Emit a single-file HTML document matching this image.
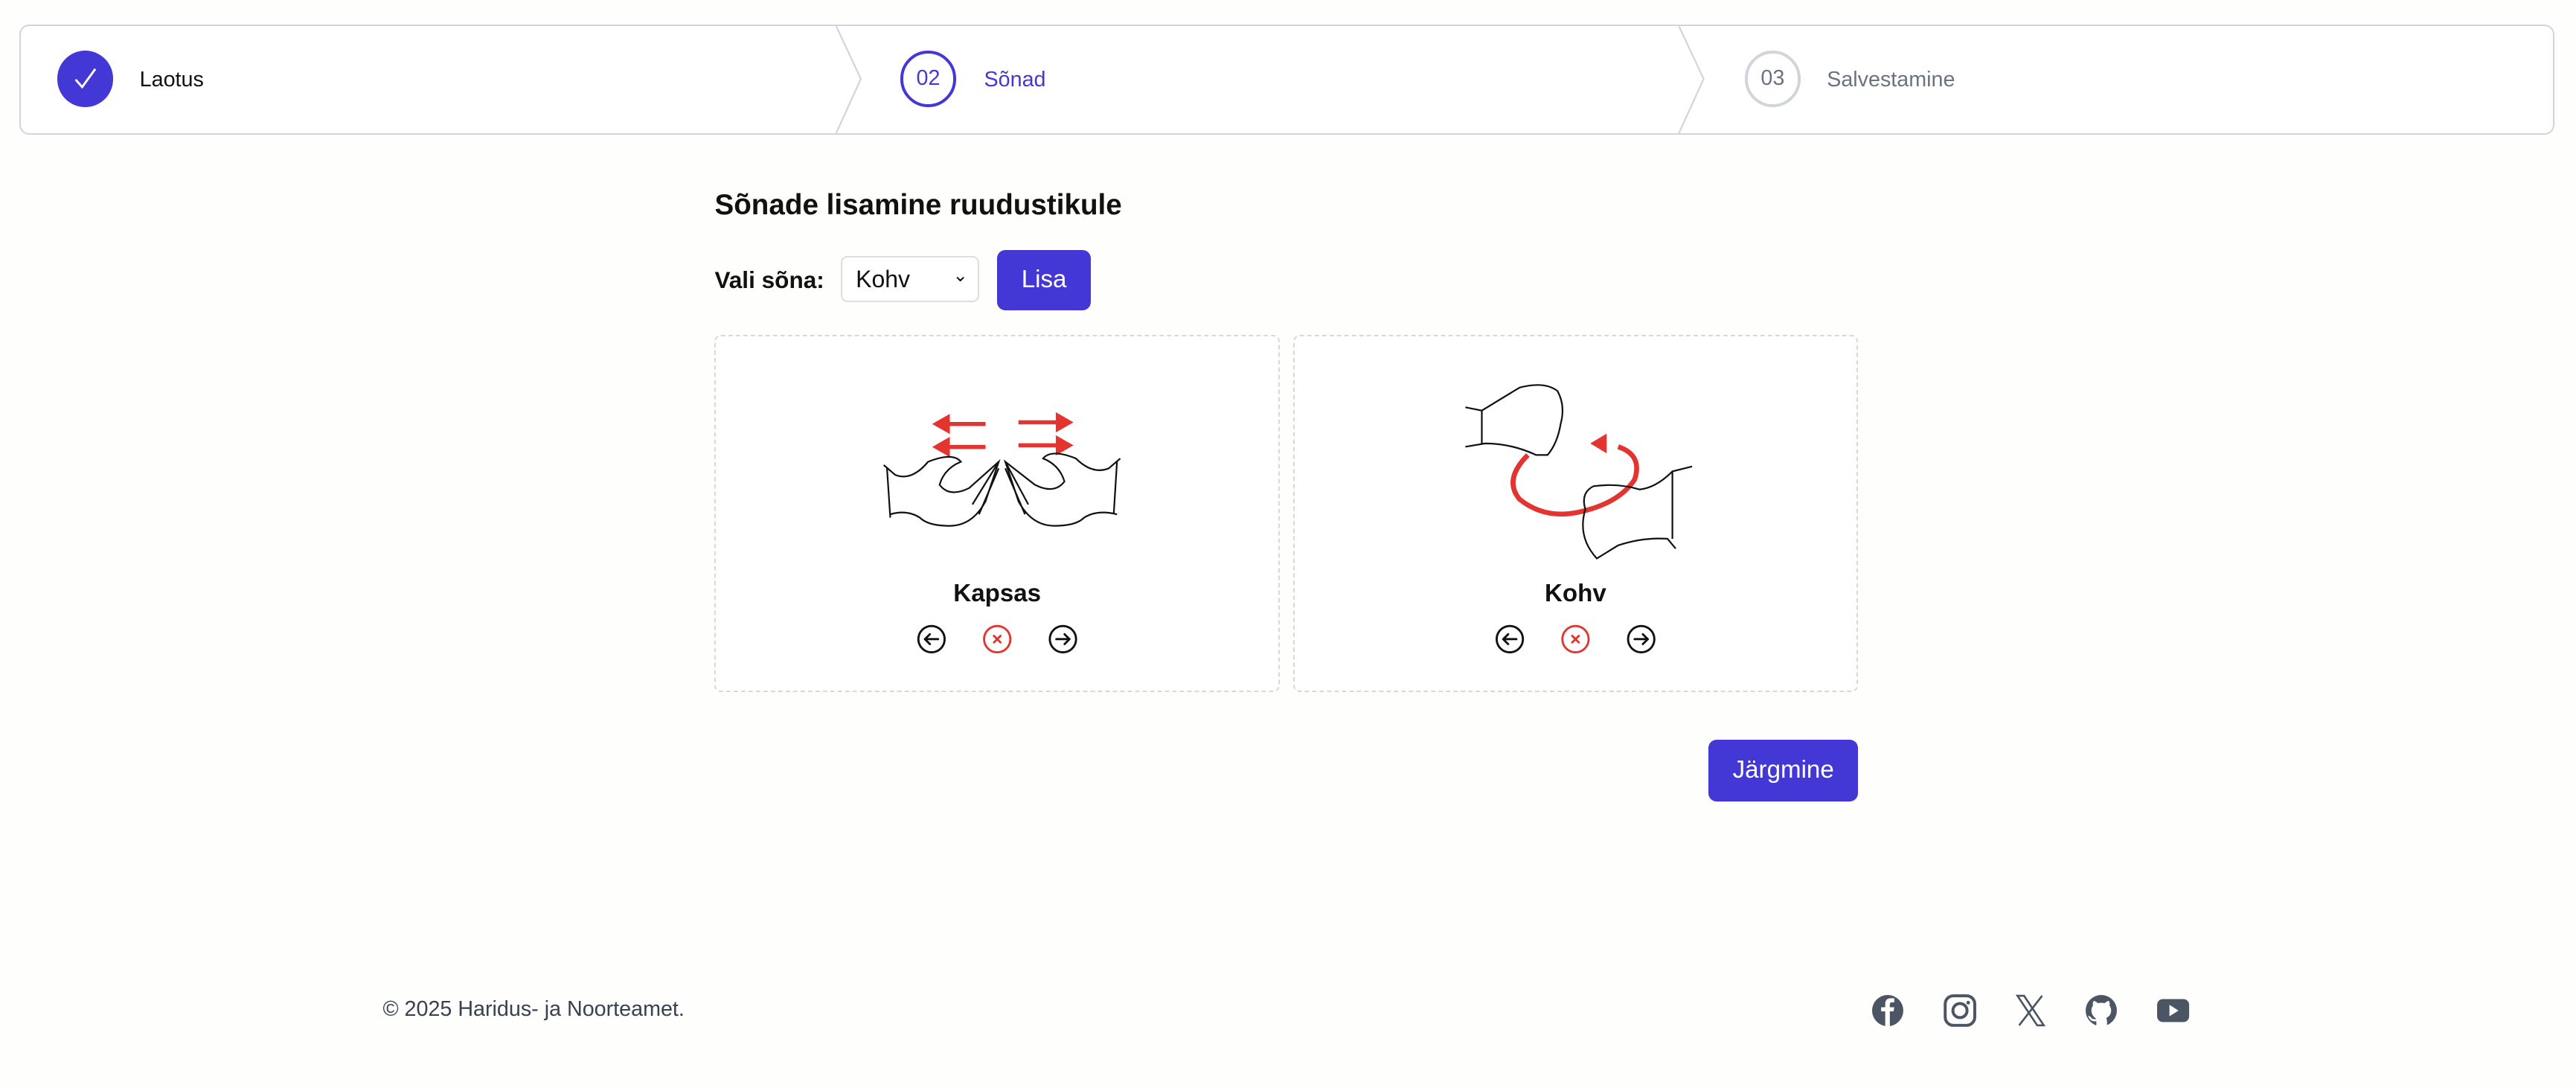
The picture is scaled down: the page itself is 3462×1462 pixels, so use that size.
<!DOCTYPE html>
<html><head><meta charset="utf-8"><style>
html,body{margin:0;padding:0;background:#fefefd;}
body{width:1568px;height:662px;zoom:2.20791;position:relative;overflow:hidden;font-family:"Liberation Sans",Arial,sans-serif;color:#111;}
.abs{position:absolute;}
.stepper{left:12px;top:15px;width:1541px;height:65px;border:1px solid #d1d5db;border-radius:6px;background:#fff;}
.circ{width:34px;height:34px;border-radius:50%;box-sizing:border-box;display:flex;align-items:center;justify-content:center;font-size:13px;}
.lbl{font-size:13px;}
.btn{background:#4338d6;color:#fff;border-radius:5px;display:flex;align-items:center;justify-content:center;font-size:15px;}
.card{width:344px;height:217px;border:1px dashed #d8d8d8;border-radius:4px;background:#fff;box-sizing:border-box;}
.name{font-weight:bold;font-size:15px;width:344px;text-align:center;}
</style></head><body>
<div class="abs stepper"></div>
<svg class="abs" style="left:0;top:0" width="1568" height="90">
<polyline points="509,16 524,48 509,81" fill="none" stroke="#d1d5db" stroke-width="1"/>
<polyline points="1022,16 1037,48 1022,81" fill="none" stroke="#d1d5db" stroke-width="1"/>
</svg>
<div class="abs circ" style="left:35px;top:31px;background:#4338d6;">
<svg width="18" height="18" viewBox="0 0 18 18"><path d="M3 9.5 L7 14 L15 3" fill="none" stroke="#fff" stroke-width="1.3"/></svg></div>
<div class="abs lbl" style="left:85px;top:41px;color:#111;">Laotus</div>
<div class="abs circ" style="left:548px;top:31px;border:2px solid #4338d6;color:#4338d6;">02</div>
<div class="abs lbl" style="left:599px;top:41px;color:#4338d6;">Sõnad</div>
<div class="abs circ" style="left:1062px;top:31px;border:2px solid #d1d5db;color:#6b7280;">03</div>
<div class="abs lbl" style="left:1112px;top:41px;color:#6b7280;">Salvestamine</div>

<div class="abs" style="left:435px;top:115px;font-size:17.5px;font-weight:bold;">Sõnade lisamine ruudustikule</div>
<div class="abs" style="left:435px;top:162px;font-size:14.3px;font-weight:bold;">Vali sõna:</div>
<div class="abs" style="left:512px;top:156px;width:84px;height:28px;border:1px solid #ddd;border-radius:4px;background:#fff;box-sizing:border-box;font-size:14.5px;padding:5px 8px;">Kohv<span style="position:absolute;right:6px;top:4px;font-size:11px;">&#8964;</span></div>
<div class="abs btn" style="left:607px;top:152px;width:57px;height:37px;">Lisa</div>

<div class="abs card" style="left:435px;top:204px;"></div>
<div class="abs card" style="left:787px;top:204px;"></div>
<svg class="abs" style="left:530px;top:245px" width="160" height="85" viewBox="0 0 160 85">
<g stroke="#e3342f" stroke-width="2.5" fill="#e3342f">
<line x1="45" y1="13" x2="70" y2="13"/><polygon points="40,13 47,9 47,17"/>
<line x1="45" y1="27" x2="70" y2="27"/><polygon points="40,27 47,23 47,31"/>
<line x1="90" y1="12" x2="114" y2="12"/><polygon points="121,12 114,8 114,16"/>
<line x1="90" y1="26" x2="114" y2="26"/><polygon points="121,26 114,22 114,30"/>
</g>
<g fill="none" stroke="#111" stroke-width="1">
<path d="M10 40 L12 70 M8 38 L15 44 Q25 48 35 36 Q50 30 55 36 Q45 40 42 50 Q48 58 60 52 L78 36 L70 60 Q62 75 48 75 Q35 75 30 70 Q22 65 12 68"/>
<path d="M150 36 L148 68 M152 34 L145 40 Q135 44 125 34 Q110 28 105 34 Q115 38 118 48 Q112 56 100 50 L82 36 L90 60 Q98 75 112 75 Q125 75 130 70 Q138 65 150 68"/>
<path d="M78 36 L62 62 M78 40 L66 68 M82 36 L96 62 M82 40 L94 68"/>
</g></svg>
<svg class="abs" style="left:890px;top:232px" width="145" height="112" viewBox="0 0 145 112">
<path d="M40 45 Q25 60 35 72 Q50 84 70 80 Q95 75 105 60 Q110 45 95 40" fill="none" stroke="#e3342f" stroke-width="3"/>
<polygon points="78,38 88,32 88,44" fill="#e3342f"/>
<g fill="none" stroke="#111" stroke-width="1">
<path d="M2 16 L12 18 Q25 10 35 4 Q50 0 58 6 Q63 15 60 26 Q58 38 52 45 L45 45 Q30 38 14 38 L2 40 M12 18 L12 38"/>
<path d="M140 52 L128 55 Q118 65 108 66 Q95 62 80 64 Q72 68 75 78 Q70 95 82 108 L95 100 Q110 95 125 96 L130 102 M128 55 L128 96"/>
</g></svg>

<div class="abs name" style="left:435px;top:353px;">Kapsas</div>
<div class="abs name" style="left:787px;top:353px;">Kohv</div>

<svg class="abs" style="left:0;top:0" width="1568" height="420" viewBox="0 0 1568 420">
<g fill="none" stroke-width="1.3" stroke-linecap="round" stroke-linejoin="round">
<g stroke="#111"><circle cx="567" cy="389" r="8"/><path d="M571 389 H563 M566 386 L563 389 L566 392"/>
<circle cx="647" cy="389" r="8"/><path d="M643 389 H651 M648 386 L651 389 L648 392"/>
<circle cx="919" cy="389" r="8"/><path d="M923 389 H915 M918 386 L915 389 L918 392"/>
<circle cx="999" cy="389" r="8"/><path d="M995 389 H1003 M1000 386 L1003 389 L1000 392"/></g>
<g stroke="#e3342f"><circle cx="607" cy="389" r="8"/><path d="M605 387 L609 391 M609 387 L605 391"/>
<circle cx="959" cy="389" r="8"/><path d="M957 387 L961 391 M961 387 L957 391"/></g>
</g></svg>

<div class="abs btn" style="left:1040px;top:450px;width:91px;height:38px;">Järgmine</div>

<div class="abs" style="left:233px;top:607px;font-size:13px;color:#374151;">© 2025 Haridus- ja Noorteamet.</div>
<svg class="abs" style="left:1130px;top:596px" width="220" height="40" viewBox="0 0 220 40">
<g fill="#4b5563">
<circle cx="19" cy="19" r="9.5"/>
<path d="M17.5 29 V19.5 H15 V17 H17.5 V15 Q17.5 11.5 21 11.5 H23 V14 H21.5 Q20.3 14 20.3 15.3 V17 H23 L22.6 19.5 H20.3 V29 Z" fill="#fefefd"/>
</g>
<g fill="none" stroke="#4b5563" stroke-width="1.8"><rect x="54" y="10" width="18" height="18" rx="5"/><circle cx="63" cy="19" r="4.3"/></g>
<circle cx="68" cy="14.2" r="1.1" fill="#4b5563"/>
<g fill="none" stroke="#4b5563" stroke-width="1.2"><path d="M98 10 H102 L114 28 H110 Z"/><path d="M113 10 L99 28"/></g>
<circle cx="149" cy="19" r="9.5" fill="#4b5563"/>
<path d="M146 29 V25.5 Q142 26 141 22 Q142.5 22.5 143.5 24 Q145 24.5 146 24 Q143 22 143 19 Q143 17 144 16 Q143.5 14.5 144.5 13 Q146 13.5 147 14.5 Q149 14 151 14.5 Q152 13.5 153.5 13 Q154.5 14.5 154 16 Q155 17 155 19 Q155 22 152 23.5 Q152.5 24.5 152.5 25.5 V29 Z" fill="#fefefd"/>
<rect x="183" y="12" width="19.5" height="14" rx="3.5" fill="#4b5563"/>
<path d="M190.5 15.5 V22.5 L196 19 Z" fill="#fefefd"/>
</svg>
</body></html>
